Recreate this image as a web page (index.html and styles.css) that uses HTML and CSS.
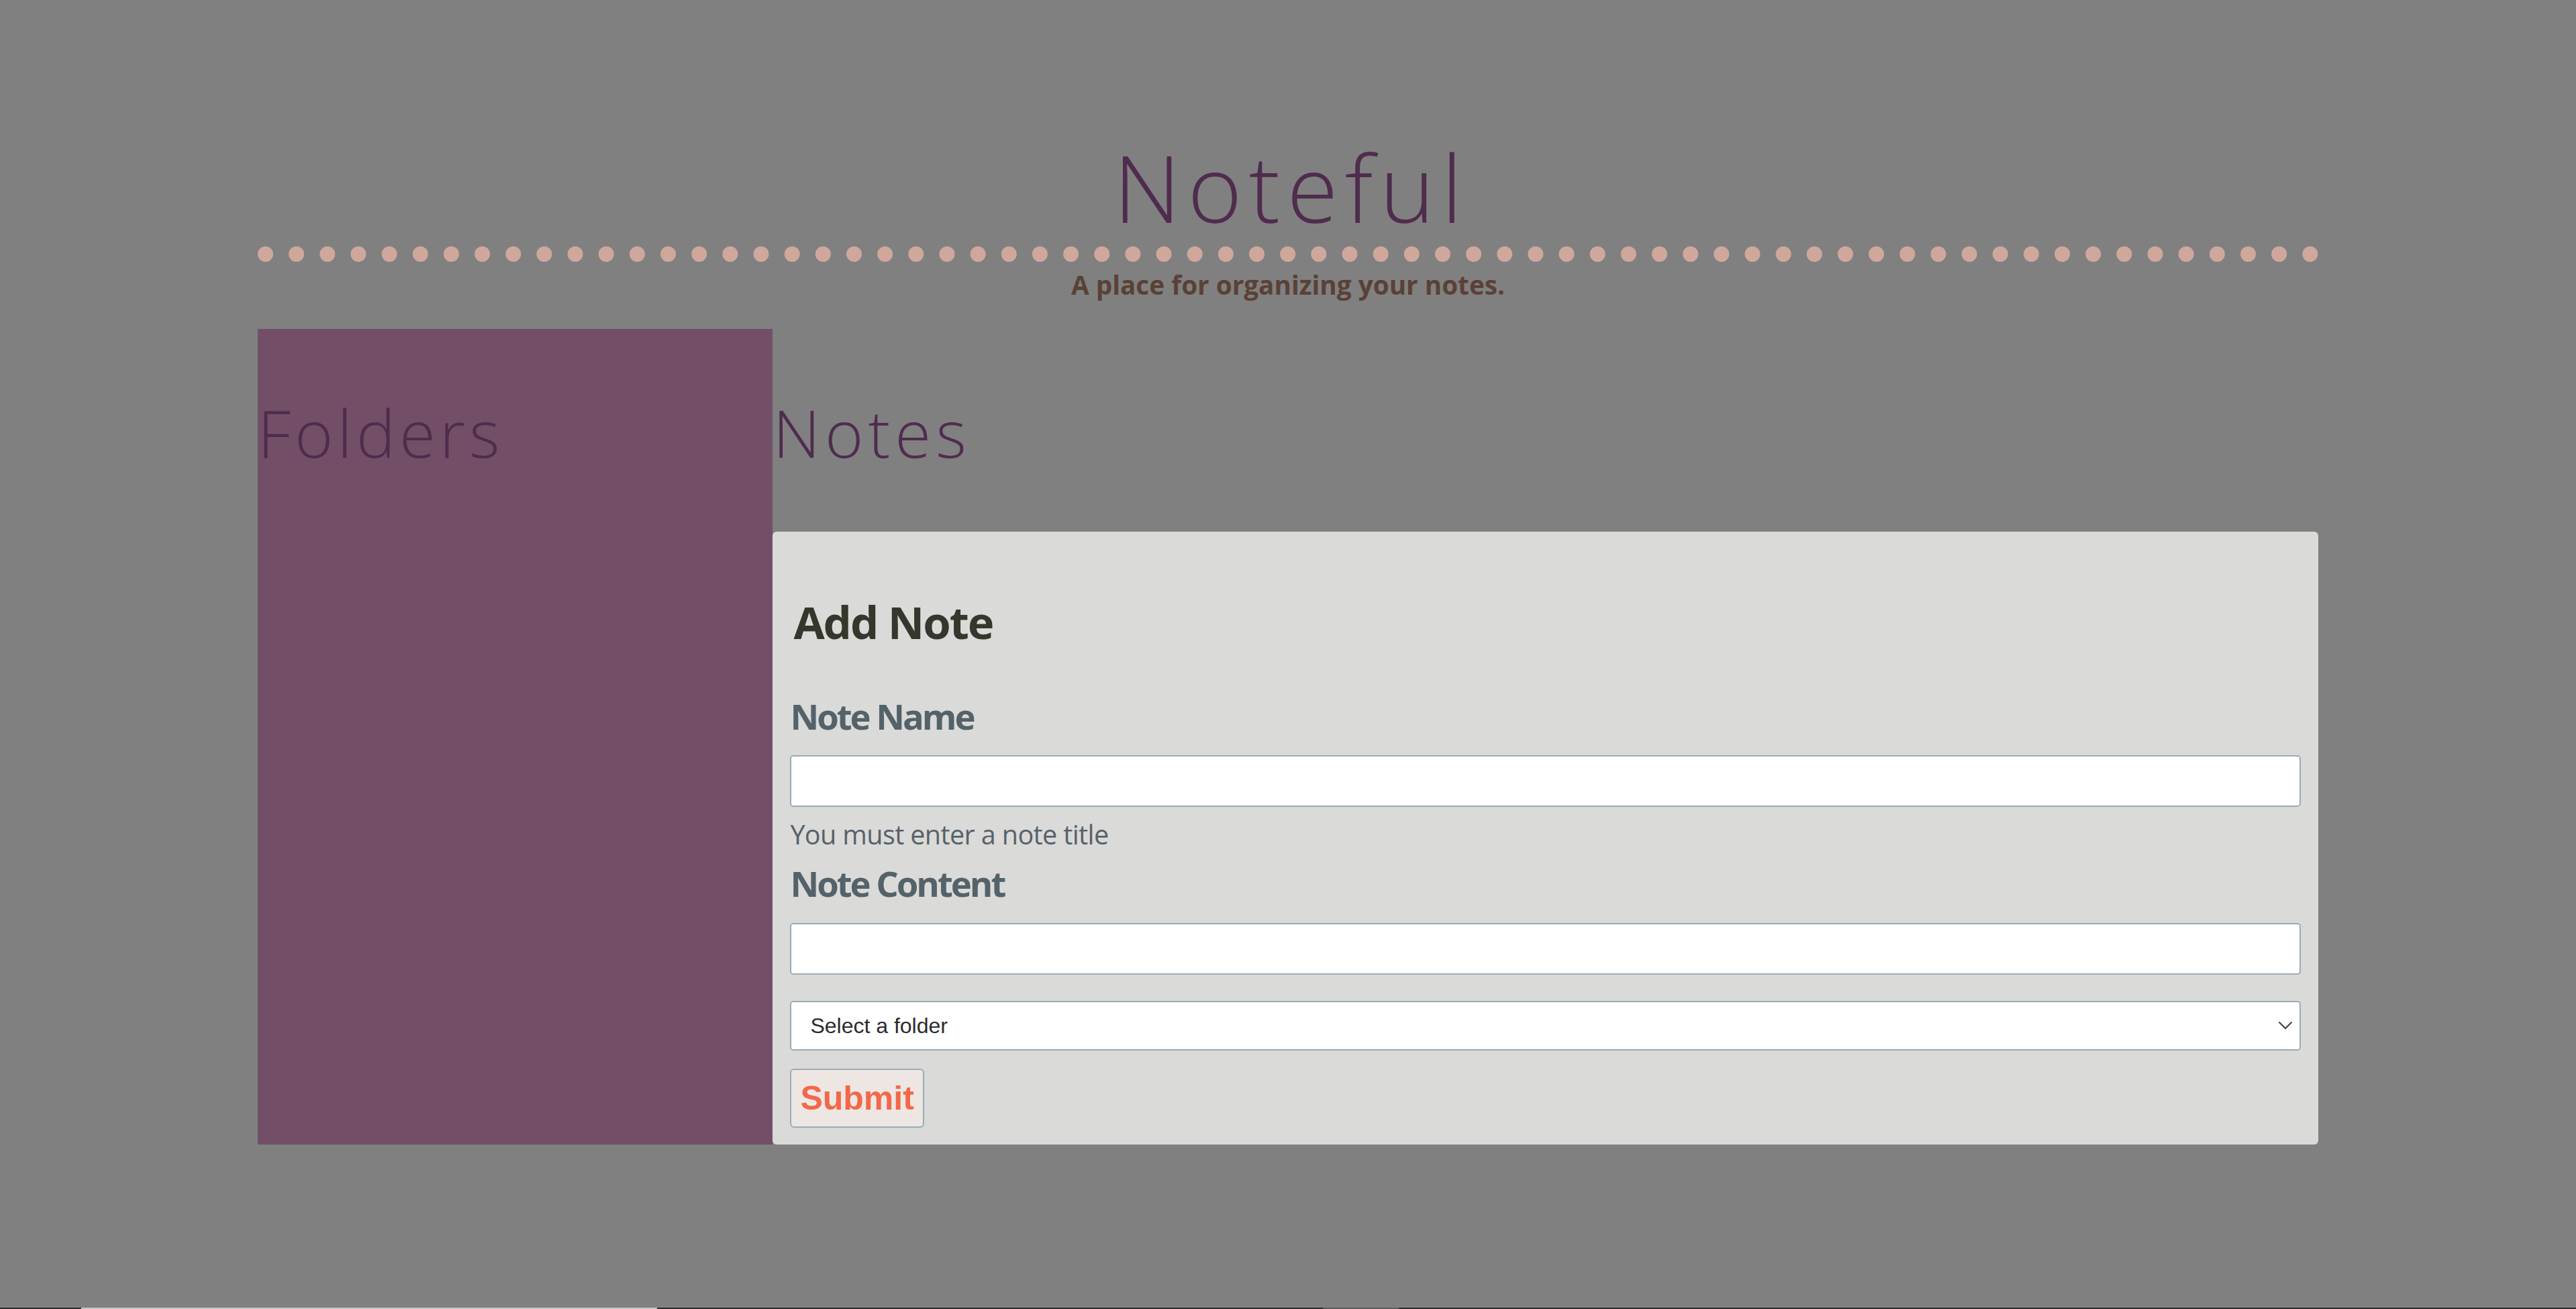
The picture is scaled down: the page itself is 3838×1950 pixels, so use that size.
FILE: index.html
```html
<!DOCTYPE html>
<html lang="en">
<head>
<meta charset="utf-8">
<title>Noteful</title>
<link rel="stylesheet" href="styles.css">
</head>
<body>
<div class="app">
  <header class="header">
    <h1 class="title">Noteful</h1>
    <p class="tagline">A place for organizing your notes.</p>
  </header>
  <main class="layout">
    <nav class="sidebar">
      <h2 class="section-title section-folders">Folders</h2>
    </nav>
    <section class="notes">
      <h2 class="section-title section-notes">Notes</h2>
      <div class="card">
        <h2 class="card-title">Add Note</h2>
        <form class="form">
          <label class="label" for="name">Note Name</label>
          <input class="field field-first" id="name" type="text">
          <p class="error">You must enter a note title</p>
          <label class="label label-second" for="content">Note Content</label>
          <input class="field" id="content" type="text">
          <div class="select-wrap">
            <select class="select"><option>Select a folder</option></select>
            <svg class="chevron" width="22" height="13" viewBox="0 0 22 13"><polyline points="1.5,1.5 11,11 20.5,1.5" fill="none" stroke="#3b3b30" stroke-width="2"/></svg>
          </div>
          <button class="submit" type="button">Submit</button>
        </form>
      </div>
    </section>
  </main>
</div>
<div class="os-bar"></div>
</body>
</html>
```

FILE: styles.css
```css
html, body {
  margin: 0;
  padding: 0;
  background: #808080;
}

body {
  font-family: "Open Sans", "Noto Sans", sans-serif;
}

.app {
  width: 80%;
  margin: 0 auto;
}

.header {
  padding-top: 209px;
}

.title {
  margin: 0;
  padding-bottom: 19px;
  padding-left: 10px;
  font-size: 139px;
  font-weight: 300;
  line-height: 139px;
  letter-spacing: 10px;
  color: #4f2c4d;
  text-align: center;
  border-bottom: 23px dotted #cfa89b;
}

.tagline {
  margin: 15px 0 0;
  font-size: 38.7px;
  font-weight: 700;
  line-height: 1;
  color: #5a4136;
  text-align: center;
}

.layout {
  display: flex;
  margin-top: 46px;
}

.sidebar {
  flex: 0 0 25%;
  background: #724f67;
}

.notes {
  flex: 1 1 auto;
  min-width: 0;
}

.section-title {
  margin: 0;
  padding-top: 105px;
  font-size: 98px;
  font-weight: 300;
  line-height: 98px;
  letter-spacing: 6px;
  color: #4f2c4d;
}

.section-notes {
  letter-spacing: 7px;
}

.card {
  margin-top: 99px;
  background: #dadad8;
  border-radius: 6px;
  padding: 101px 26px 25.7px;
}

.card-title {
  margin: 0;
  padding-left: 5px;
  font-size: 67px;
  font-weight: 700;
  line-height: 67px;
  letter-spacing: -2px;
  color: #36372c;
}

.form {
  display: flex;
  flex-direction: column;
  align-items: flex-start;
}

.label {
  display: block;
  margin-top: 81px;
  font-size: 52.6px;
  font-weight: 700;
  line-height: 52.6px;
  letter-spacing: -3px;
  color: #54626a;
}

.label-second {
  margin-top: 26.6px;
}

.field {
  display: block;
  box-sizing: border-box;
  width: 100%;
  height: 77px;
  margin: 32px 0 0;
  border: 2px solid #97adb7;
  border-radius: 5px;
  background: #ffffff;
  outline: none;
}

.field-first {
  margin-top: 31.5px;
}

.error {
  margin: 22.6px 0 0;
  font-size: 39.5px;
  line-height: 39.5px;
  letter-spacing: -0.6px;
  color: #56626a;
}

.select-wrap {
  position: relative;
  width: 100%;
  margin-top: 39.4px;
}

.select {
  display: block;
  box-sizing: border-box;
  width: 100%;
  height: 74px;
  margin: 0;
  padding: 0 0 0 28px;
  -webkit-appearance: none;
  appearance: none;
  border: 2px solid #97adb7;
  border-radius: 5px;
  background: #ffffff;
  font-family: "Liberation Sans", Arial, sans-serif;
  font-size: 32px;
  color: #2b2b2b;
  outline: none;
}

.chevron {
  position: absolute;
  right: 12px;
  top: 30px;
  pointer-events: none;
}

.submit {
  display: block;
  box-sizing: border-box;
  height: 88px;
  margin-top: 26.3px;
  padding: 0 13px;
  border: 2px solid #97adb7;
  border-radius: 6px;
  background: #ede6e3;
  font-family: "Liberation Sans", Arial, sans-serif;
  font-size: 50px;
  font-weight: 700;
  color: #f26849;
  cursor: pointer;
}

.os-bar {
  position: fixed;
  left: 0;
  right: 0;
  bottom: 0;
  height: 2px;
  background: linear-gradient(to right, #2b2b2b 121px, #c9c9c9 121px, #c9c9c9 979px, #2b2b2b 979px, #2b2b2b 1971px, #5a5a5a 1971px, #5a5a5a 2084px, #2b2b2b 2084px);
}
```
